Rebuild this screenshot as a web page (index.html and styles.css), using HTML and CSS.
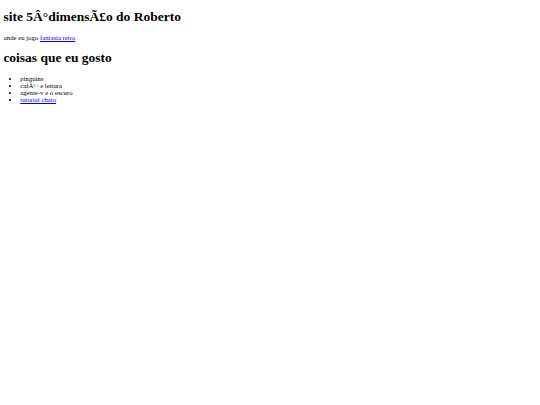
FILE: index.html
```html
<!DOCTYPE html>
<html>
<head>
<meta charset="utf-8">
<title>site 5Â°dimensÃ£o do Roberto</title>
<link rel="stylesheet" href="styles.css">
</head>
<body class="page">
<h1 class="title">site 5Â°dimensÃ£o do Roberto</h1>
<p class="intro">onde eu jogo <a class="link" href="#">fantasia retro</a></p>
<h2 class="title">coisas que eu gosto</h2>
<ul class="likes">
<li>pinguins</li>
<li>cafÃ© e leitura</li>
<li>agente-v e o escuro</li>
<li><a class="link" href="#">tutorial chato</a></li>
</ul>
</body>
</html>
```
FILE: styles.css
```css
html { background: #fff; }
.page {
  margin: 0 3.375px 3.375px;
  font-family: "Liberation Serif", "Times New Roman", serif;
  font-size: 6.75px;
  color: #000;
}
.title {
  font-size: 13.5px;
  margin: 9.045px 0;
  font-weight: bold;
}
.intro { margin: 6.75px 0; }
.likes {
  margin: 6.75px 0;
  padding-left: 16.875px;
}
.link { color: #0000ee; }
```
